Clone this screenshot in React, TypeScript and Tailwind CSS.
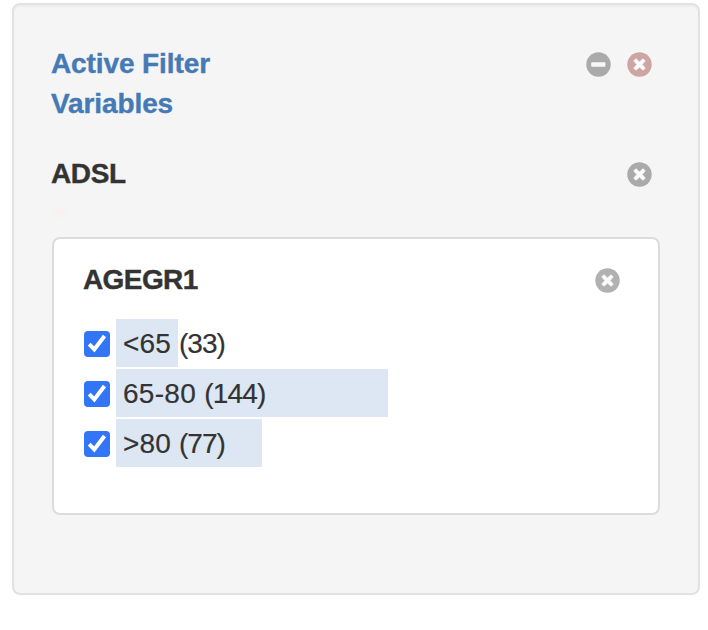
type IconProps = { kind: 'minus' | 'remove'; className: string };

function CircleIcon({ kind, className }: IconProps) {
  return (
    <svg viewBox="0 0 25 25" className={`block h-[25px] w-[25px] shrink-0 ${className}`}>
      <circle cx="12.5" cy="12.5" r="12.2" fill="currentColor" />
      {kind === 'minus' ? (
        <rect x="5.2" y="10.2" width="14.2" height="4.5" rx="0.6" fill="#f7f7f7" />
      ) : (
        <path
          d="M8.9 6.8 12.5 10 16.1 6.8 18.2 8.9 15 12.5 18.2 16.1 16.1 18.2 12.5 15 8.9 18.2 6.8 16.1 10 12.5 6.8 8.9Z"
          fill="#fafafa"
          stroke="#fafafa"
          strokeWidth="1"
          strokeLinejoin="round"
        />
      )}
    </svg>
  );
}

const choices = [
  {
    label: '<65',
    count: 33,
    bar: 'w-[62px]',
    labelTracking: 'tracking-[0.15px]',
    countTracking: 'tracking-[-0.95px]',
  },
  {
    label: '65-80',
    count: 144,
    bar: 'w-[272px]',
    labelTracking: 'tracking-[0.3px]',
    countTracking: 'tracking-[-0.8px]',
  },
  {
    label: '>80',
    count: 77,
    bar: 'w-[146px]',
    labelTracking: 'tracking-[0.15px]',
    countTracking: 'tracking-[-0.95px]',
  },
];

function Choice({ label, count, bar, labelTracking, countTracking }: (typeof choices)[number]) {
  return (
    <label className="flex h-12 items-center gap-1.5">
      <span
        role="checkbox"
        aria-checked="true"
        className="mt-0.5 h-[26px] w-[26px] shrink-0 rounded-[4px] bg-[#3275f6]"
      >
        <svg viewBox="0 0 26 26" className="block h-full w-full">
          <path d="M5.2 13.2 10.3 18.4 20.5 5" fill="none" stroke="#fff" strokeWidth="4" />
        </svg>
      </span>
      <span className={`flex h-12 items-center bg-[#dde7f3] pt-0.5 pl-[7px] whitespace-nowrap ${bar}`}>
        <span className="[-webkit-text-stroke:0.2px_#333]">
          <span className={labelTracking}>{label} </span>
          <span className={countTracking}>({count})</span>
        </span>
      </span>
    </label>
  );
}

export default function App() {
  return (
    <div className="h-[630px] w-[708px] overflow-hidden bg-white pt-[3px] pl-3 font-['Liberation_Sans',Arial,sans-serif] text-[28px] leading-10 text-[#333]">
      <section className="h-[592px] w-[688px] rounded-lg border-2 border-[#e2e2e2] bg-[#f5f5f5] px-[38px] pt-[39px] shadow-[inset_0_2px_2px_rgba(0,0,0,0.04)]">
        <header className="flex items-start justify-between pr-2">
          <h2 className="-ml-px w-[200px] font-bold tracking-[-0.1px] text-[#457ab5] [-webkit-text-stroke:0.4px_#457ab5]">
            Active Filter Variables
          </h2>
          <div className="flex gap-4 pt-2">
            <CircleIcon kind="minus" className="text-[#aaa]" />
            <CircleIcon kind="remove" className="text-[#cda6a3]" />
          </div>
        </header>
        <div className="mt-[30px] flex items-start justify-between pr-2">
          <h3 className="-ml-px font-bold tracking-[-0.4px] [-webkit-text-stroke:0.4px_#333]">ADSL</h3>
          <CircleIcon kind="remove" className="mt-2 text-[#aaa]" />
        </div>
        <div className="mt-[15px] ml-px h-2 w-[15px] rounded-full bg-[#f9f0f1] blur-[1px]" />
        <div className="mt-5 h-[278px] w-[608px] rounded-lg border-2 border-[#dcdcdc] bg-white px-[30px] pt-[21px]">
          <div className="flex items-start justify-between pr-2">
            <h4 className="-ml-px font-bold tracking-[-0.6px] [-webkit-text-stroke:0.4px_#333]">AGEGR1</h4>
            <CircleIcon kind="remove" className="mt-2 text-[#b1b1b1]" />
          </div>
          <div className="mt-[19px] flex flex-col gap-0.5">
            {choices.map((choice) => (
              <Choice key={choice.label} {...choice} />
            ))}
          </div>
        </div>
      </section>
    </div>
  );
}
